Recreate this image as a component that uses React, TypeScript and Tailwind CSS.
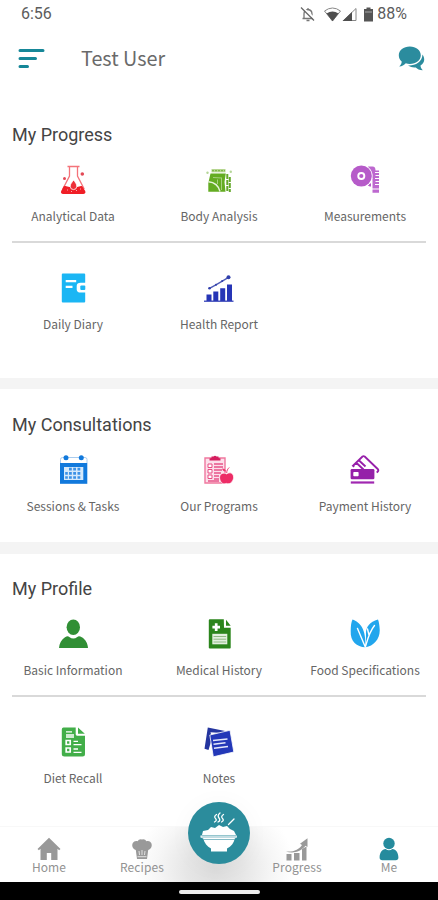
import type { ReactNode } from "react";

const labelFont = "font-['Noto_Sans_CJK_SC','Noto_Sans',sans-serif]";
const headFont = "font-['Roboto',sans-serif]";

function Icon({ children }: { children: ReactNode }) {
  return (
    <svg viewBox="0 0 30 30" className="block h-[30px] w-[30px]" fill="none">
      {children}
    </svg>
  );
}

const Flask = () => (
  <Icon>
    <path d="M9.500 1.500h12M11.500 2v9L4.800 24M19.500 2v9L26.200 24" stroke="#f4737a" strokeWidth="1.300" />
    <path d="M5.600 21.500c2.400-1.400 4 .6 6.200.4h7c2 .2 3.800-1.600 5.600-.4l2.800 4.600c.8 1.600-.2 2.900-1.900 2.900H5.100c-1.700 0-2.700-1.300-1.900-2.900z" fill="#f01e26" />
    <path d="M15.600 15c1.800 2.500 3.200 4.200 3.200 6.300a3.300 3.300 0 0 1-6.600 0c0-2.100 1.600-3.800 3.400-6.300z" fill="#ed3039" stroke="#fff" strokeWidth=".8" />
    <path d="M9 25h.8M13 26.500h.8M18 25.500h.8M22 24h.8" stroke="#fff" strokeWidth=".8" />
    <circle cx="6.500" cy="13.500" r="1.500" fill="#e34956" />
    <circle cx="24.300" cy="9" r="1.800" fill="#e34956" />
  </Icon>
);

const Body = () => (
  <Icon>
    <path d="M7.500 4h14v3.300h-14z" fill="#b6d690" />
    <path d="M8 5.600h13" stroke="#7fb84a" strokeWidth="1.400" strokeDasharray="2 1" />
    <path d="M6.500 8.500h15.300l-1.300 8.500 1 9.800H4.300V18z" fill="#64ac22" />
    <path d="M4.500 16.800c6.500.5 10 4 11.500 9.700" stroke="#e6f3da" strokeWidth="1.400" />
    <path d="M9 12.500l9 .5M13.500 14.500v4.500M17.500 13v12" stroke="#a7d07f" strokeWidth="1" />
    <path d="M23.300 9v18M25.800 12v15" stroke="#65a92b" strokeWidth="2" strokeDasharray="5 1" />
    <circle cx="3.500" cy="7.800" r="1.200" fill="#b4d697" />
    <circle cx="26.800" cy="6.800" r="1.200" fill="#b4d697" />
  </Icon>
);

const Tape = () => (
  <Icon>
    <path d="M18 1.500h4.500c2.200 0 3 1.500 3 4H29v22.300h-6.500V13L19 9z" fill="#bd68cf" />
    <path d="M25 7.500h4.500M25.500 10.500h4M25 13.500h4.500M25.500 16.500h4M25 19.500h4.500M22 24h7.500" stroke="#fff" strokeWidth="1.200" />
    <circle cx="11.300" cy="11" r="11.300" fill="#fff" />
    <circle cx="11.300" cy="11" r="10.500" fill="#b65bc9" />
    <circle cx="11.300" cy="11" r="4" fill="#fff" />
    <circle cx="11.300" cy="11" r="2.100" fill="#b65bc9" />
    <path d="M18.500 20.500l2 .7v-2.500z" fill="#b65bc9" stroke="#b65bc9" />
  </Icon>
);

const Diary = () => (
  <Icon>
    <path d="M4.800.5h21.400a1 1 0 0 1 1 1v8.300h-4.500c-2.600 0-4 1.200-4 3.200v3.400c0 2 1.400 3.200 4 3.200h4.500v9a1 1 0 0 1-1 1H4.800a1 1 0 0 1-1-1V1.500a1 1 0 0 1 1-1z" fill="#1bb6f4" />
    <path d="M7.700 8.200h10.500M7.700 13.800h6.800" stroke="#fff" strokeWidth="2.300" />
    <rect x="22.300" y="12.400" width="5" height="4.600" rx="1" fill="#1bb6f4" />
  </Icon>
);

const Report = () => (
  <Icon>
    <path d="M2.500 21.500h5V28h-5zM9.300 18.500h5V28h-5zM16.200 15.300h5V28h-5zM23 11.500h5V28h-5z" fill="#2635b6" />
    <path d="M0 28.200h29.500" stroke="#3340b8" strokeWidth="1.300" />
    <path d="M5.500 15.300l6.800-3.700 6-3.500 6.200-3.800" stroke="#4e5ab5" strokeWidth="1.400" />
    <circle cx="5.500" cy="15.300" r="1.300" fill="#303fac" />
    <circle cx="12" cy="11.700" r="1" fill="#303fac" />
    <circle cx="18.200" cy="8" r="1" fill="#303fac" />
    <circle cx="24.500" cy="4.200" r="2" fill="#303fac" />
  </Icon>
);

const Calendar = () => (
  <Icon>
    <path d="M2.500 8V4.500Q2.500 2.500 4.500 2.500H27Q29 2.500 29 4.500V8" stroke="#a9ccef" strokeWidth="1" />
    <path d="M2 8h27.300v20.800H2z" fill="#1179dc" />
    <path d="M6 12h19.300v13H6z" fill="#d5e9fb" />
    <path d="M11 12.800h2.800v2.800H11zM15.200 12.800H18v2.800h-2.800zM19.500 12.800h2.800v2.800h-2.800zM7.200 17h2.600v2.800H7.200zM11 17h2.800v2.800H11zM15.200 17H18v2.800h-2.800zM19.500 17h2.800v2.800h-2.800zM7.200 21.300h2.600v2.500H7.200zM11 21.300h2.800v2.500H11zM15.200 21.300H18v2.500h-2.800zM19.500 21.300h2.800v2.500h-2.800z" fill="#3b91e6" />
    <circle cx="8" cy="2.700" r="2.500" fill="#1179dc" />
    <circle cx="23.300" cy="2.700" r="2.500" fill="#1179dc" />
  </Icon>
);

const Programs = () => (
  <Icon>
    <path d="M1 3h20v25H1z" fill="#fce0eb" stroke="#ef789f" strokeWidth="1.400" />
    <path d="M5.500 3.500l2-.5V1.500h2Q11 0 12.500 1.500h2V3l2 .5v2h-11z" fill="#d51e5f" />
    <path d="M4 9h4v3.500H4zM4 14.500h4V18H4zM4 20h4v3.500H4z" fill="#fff" stroke="#e84d83" />
    <path d="M10 9h9M10 12h9M10 15h8M10 18h7M10 21h5M10 24h5M4 26h11" stroke="#e65389" strokeWidth="1.400" />
    <path d="M18 18.500c-3.200 1.200-3 6.500-.5 9 1.500 1.600 3 1.600 4.800.9 2 .7 4 .4 5.500-1.400 2.200-2.600 2.600-7.200-.3-8.700-1.800-1-3.200-.3-4.900.6-1.600-.7-2.900-1-4.600-.4z" fill="#ed2c66" stroke="#fff" strokeWidth=".7" />
    <path d="M22.700 18c0-2.500 1-4 2.500-5.500" stroke="#ed3871" strokeWidth="1" />
    <path d="M22 16.500c-2.500 0-3.500-1-4-3 2.500 0 3.700 1 4 3z" fill="#ed3871" />
  </Icon>
);

const Cards = () => (
  <Icon>
    <path d="M4.200 11.800L3 10.700 12.500 1.500Q13.500.8 14.700 1.500l13 12.500q1 1 .3 2.200l-1.200 1.400M6 7.500l7.500 7M8.500 5l7 6.500" stroke="#9720aa" strokeWidth="1.900" />
    <rect x=".6" y="14" width="23.800" height="10.300" rx="1.300" fill="#9521a9" />
    <rect x="3.300" y="17" width="5.300" height="4.300" rx=".8" fill="#fff" />
    <path d="M.8 27.500h23.400" stroke="#a027b1" strokeWidth="2.200" />
  </Icon>
);

const Person = () => (
  <Icon>
    <ellipse cx="15.300" cy="8.200" rx="6.700" ry="7.700" fill="#318f35" />
    <path d="M1 29c.3-4.800 2.500-8.700 6-10.800 1.800-1 3-1.500 4.300-.3q4 3 8 0c1.300-1.200 2.800-.7 4.500.3C27.400 20.300 29.800 24.200 30 29z" fill="#318f35" />
  </Icon>
);

const Medical = () => (
  <Icon>
    <path d="M5.800.3h14l.2 8.500h6.700v20q0 .7-.8.700H5.800q-1 0-1-.8V1.300q0-1 1-1z" fill="#2b851c" />
    <path d="M22 .8l4.700 6H22z" fill="#2b851c" />
    <path d="M12.200 4.300v7.600M8.400 8.100H16" stroke="#fff" strokeWidth="2.700" />
    <path d="M8.300 14.800h15v10.500h-15z" fill="#e2efdf" />
    <path d="M9.500 17.500h12.700M9.500 20.200h12.700M9.500 23h12.700" stroke="#90ba84" strokeWidth="1" />
  </Icon>
);

const Leaves = () => (
  <Icon>
    <path d="M2.500.5C10 3.300 16.500 10 15.200 28.300 7 28 .1 22.500.7 12 .8 7 1.200 3 2.500.5z" fill="#22a6ed" />
    <path d="M28 .5C19 2.800 15.500 9 16 15.500l-.3 12.800C23.500 27 30.200 20 29.700 10.500 29.500 6.500 29 3 28 .5z" fill="#22a6ed" />
    <path d="M7.500 9.500l7.700 18.300M24.500 6.500c-5 6-6.500 12-9 21M17.500 10l1.500 6" stroke="#fff" strokeWidth="1.400" strokeLinecap="round" />
  </Icon>
);

const Diet = () => (
  <Icon>
    <path d="M5.500.5h12.200v6.800q0 1.400 1.400 1.400H27V27q0 2.500-2.500 2.500h-18Q3.800 29.500 3.800 27V2.500q0-2 1.700-2z" fill="#42ae49" />
    <path d="M20 .5l6.800 6.300H20z" fill="#42ae49" />
    <path d="M8 4.800h6M8 8h8M8 10h8M15.500 14.300H20M15.500 17.600h8M15.500 22H20M15.500 25.300h8" stroke="#fff" strokeWidth="1.300" />
    <path d="M8.200 13.500h4v4h-4zM8.200 21h4v4h-4z" stroke="#fff" strokeWidth="1.700" />
  </Icon>
);

const Notes = () => (
  <Icon>
    <path d="M3.800.5l18.500 3.700-.3 2L6.500 5.300 8 11.500 4.500 23 .5 21.700z" fill="#24359f" />
    <path d="M5.800 8L26 3.300 29.800 25 9.300 29.800z" fill="#2338b8" stroke="#fff" strokeWidth=".8" />
    <path d="M9 13.500l14.500-1.500M9.500 17.300l12-1.500M10 21.200l14-1.700" stroke="#e5e9fb" strokeWidth="1.500" />
  </Icon>
);

interface Item {
  label: string;
  icon: ReactNode;
}

function Tile({ label, icon }: Item) {
  return (
    <div className="flex w-[146px] flex-col items-center">
      {icon}
      <span className={`mt-[11px] mb-px flex h-5 items-center justify-center whitespace-nowrap text-[12px] text-[#666] ${labelFont}`}>{label}</span>
    </div>
  );
}

function Heading({ children }: { children: ReactNode }) {
  return <h2 className={`pl-3 text-[18px] leading-6 text-[#444] ${headFont}`}>{children}</h2>;
}

function Divider() {
  return <div className="mx-[12px] mt-[14px] mb-[30px] h-[2px] bg-[#d9d9d9]" />;
}

const progress: Item[] = [
  { label: "Analytical Data", icon: <Flask /> },
  { label: "Body Analysis", icon: <Body /> },
  { label: "Measurements", icon: <Tape /> },
];
const progressMore: Item[] = [
  { label: "Daily Diary", icon: <Diary /> },
  { label: "Health Report", icon: <Report /> },
];
const consultations: Item[] = [
  { label: "Sessions & Tasks", icon: <Calendar /> },
  { label: "Our Programs", icon: <Programs /> },
  { label: "Payment History", icon: <Cards /> },
];
const profile: Item[] = [
  { label: "Basic Information", icon: <Person /> },
  { label: "Medical History", icon: <Medical /> },
  { label: "Food Specifications", icon: <Leaves /> },
];
const profileMore: Item[] = [
  { label: "Diet Recall", icon: <Diet /> },
  { label: "Notes", icon: <Notes /> },
];

function Row({ items }: { items: Item[] }) {
  return (
    <div className="flex">
      {items.map((item) => (
        <Tile key={item.label} {...item} />
      ))}
    </div>
  );
}

function StatusBar() {
  return (
    <div className={`flex h-7 items-center justify-between pr-[31px] pl-[21px] text-[16px] text-[#5c5c5c] ${headFont}`}>
      <span>6:56</span>
      <div className="flex items-center">
        <svg width="76" height="18" viewBox="0 0 76 18" fill="none" className="mr-[2px]">
          <path d="M5 13V9q0-4 4-4.500 4 .5 4 4.500v4M3.500 13.500h11M9 3v1.500M7.500 15.500h3" stroke="#777" strokeWidth="1.300" />
          <path d="M3 2l14 13" stroke="#fff" strokeWidth="2" />
          <path d="M2 2.500l13 13" stroke="#666" strokeWidth="1.300" />
          <path d="M25.500 6q8-6 16 0l-8 10z" stroke="#888" fill="#fff" />
          <path d="M27.500 8.500q6-4 12 0l-6 7.700z" fill="#4f4f4f" />
          <path d="M57 3.500v12H44.500z" stroke="#888" fill="#fff" />
          <path d="M53 7v9h-9.500z" fill="#4f4f4f" />
          <path d="M67.500 2.500h4V4H74v12.500h-9V4h2.500z" fill="#555" />
          <path d="M66 7h7" stroke="#aaa" />
        </svg>
        <span>88%</span>
      </div>
    </div>
  );
}

function Header() {
  return (
    <header className="flex h-[61px] items-center pr-[13px] pl-[18px]">
      <svg width="28" height="22" viewBox="0 0 28 22" stroke="#168798" strokeWidth="3" strokeLinecap="round">
        <path d="M2 2.500h23M2 10.500h15.500M2 18.500h7.500" />
      </svg>
      <h1 className={`ml-[35px] mb-px flex-1 text-[19.8px] text-[#6a6a6a] ${labelFont}`}>Test User</h1>
      <svg width="27" height="25" viewBox="0 0 27 25" fill="#2b8c9e">
        <path d="M24.500 8.500c2.800 4 2.200 8.500-2 11 0 2 1.200 3.500 2.300 4.700-3.500 0-5.500-1.200-7-2.800-2.800.3-5.500-.3-7.800-1.900 7 .4 14-3 14.500-11z" />
        <path d="M11.800.5c6.200 0 11 3.700 11 8.700s-4.800 8.700-11 8.700c-1.600 0-2.800-.2-4-.6-1.800 1.900-3.700 3.100-6.600 3.200 1.800-1.600 2.500-3.400 2.500-5.100C1.800 13.900.8 11.800.8 9.200c0-5 4.800-8.700 11-8.700z" />
      </svg>
    </header>
  );
}

function NavItem({ label, icon, active = false }: { label: string; icon: ReactNode; active?: boolean }) {
  return (
    <div className={`flex w-20 flex-col items-center ${active ? "text-[#258b9d]" : "text-[#999]"}`}>
      <svg width="26" height="24" viewBox="0 0 26 24" fill="currentColor">
        {icon}
      </svg>
      <span className={`mt-[-3px] text-[12px] leading-[18px] tracking-[0.1px] text-[#929292] ${labelFont}`}>{label}</span>
    </div>
  );
}

function BottomNav() {
  return (
    <nav className="relative flex h-[56px] border-t border-[#f8f8f8] bg-[radial-gradient(ellipse_80px_72px_at_215px_42px,#dcdcdc_0%,#e6e6e6_35%,#f6f6f6_72%,#ffffff_100%)] pt-[10px] pl-[9px]">
      <NavItem label="Home" icon={<path d="M13 .8L24.500 12l-1.400 1.300-1.600-1.500V23h-6.300v-7h-4.400v7H4.500V11.800l-1.600 1.500L1.500 12z" />} />
      <div className="ml-[13px]">
        <NavItem
          label="Recipes"
          icon={
            <g>
              <path d="M8 22L6.800 13C3.500 12 2.500 8.500 3.800 6c1.200-2 3.200-2.500 4.700-1.700Q10 1.800 13 2.500q3-.7 4.500 1.800c1.800-.8 3.700-.2 4.700 1.700 1.300 2.500.3 6-3 7L18 22z" />
              <path d="M10 14l.5 4M13 13v5M16 14l-.5 4M8.500 19.700h9" stroke="#e2e2e2" strokeWidth="1" />
            </g>
          }
        />
      </div>
      <div className="ml-[75px]">
        <NavItem
          label="Progress"
          icon={
            <g>
              <path d="M2.500 17h5v6.500h-5zM10 16h5.500v7.500H10zM18 12l4.500-2.500v14H18z" />
              <path d="M2 14.500c8 .7 13-2 16-6.500l-2-1.200 7.500-5.500V10l-2-1.200C17 14.500 9.500 17 2 14.500z" />
            </g>
          }
        />
      </div>
      <div className="ml-[12px]">
        <NavItem
          active
          label="Me"
          icon={
            <g>
              <circle cx="13" cy="6.500" r="5.700" />
              <path d="M3.600 20.500c0-5 2.500-8 6-8.500q3.400 2.500 6.800 0c3.500.5 6 3.500 6 8.500 0 1.700-1 2.700-2.700 2.700H6.300c-1.700 0-2.700-1-2.700-2.700z" />
            </g>
          }
        />
      </div>
      <div className="absolute top-[-25px] left-[188px] h-[62px] w-[62px] rounded-full bg-[#2b8c9c] shadow-[0_2px_20px_5px_rgba(0,0,0,0.025)]">
        <svg viewBox="0 0 62 62" fill="none">
          <path d="M28.500 12.500q-3 2-1 4t-1 3.500M32 11q-3 2.500-1 5t-1 4M35.500 12.500q-3 2-1 4t-1 3.500M40.500 22.500l5.500-5.500" stroke="#fff" strokeWidth="1.300" strokeLinecap="round" />
          <path d="M14 33l1-4 5-1 3-3 4 1 4-3 4 2 4-1 3 3 4 2 2 4z" fill="#fff" />
          <path d="M12.500 33.500h36.300v2l-2 1c-1 4.500-3.500 8-7.800 10v3H23v-3c-4-2-6.500-5.500-7.800-10l-2.700-1z" fill="#fff" />
          <path d="M13.500 35h34.500M15 37.500h32" stroke="#67aab7" strokeWidth=".8" />
        </svg>
      </div>
    </nav>
  );
}

export default function App() {
  return (
    <div className="flex h-[900px] w-[438px] flex-col overflow-hidden bg-white">
      <StatusBar />
      <Header />
      <main className="h-[737px]">
        <section className="h-[289px] pt-[34px]">
          <Heading>My Progress</Heading>
          <div className="pt-[18px]">
            <Row items={progress} />
            <Divider />
            <Row items={progressMore} />
          </div>
        </section>
        <div className="h-[11px] bg-[#f4f4f4]" />
        <section className="h-[153px] pt-[24px]">
          <Heading>My Consultations</Heading>
          <div className="pt-[18px]">
            <Row items={consultations} />
          </div>
        </section>
        <div className="h-[12px] bg-[#f4f4f4]" />
        <section className="h-[272px] pt-[23px]">
          <Heading>My Profile</Heading>
          <div className="pt-[18px]">
            <Row items={profile} />
            <Divider />
            <Row items={profileMore} />
          </div>
        </section>
      </main>
      <BottomNav />
      <div className="flex flex-1 items-center justify-center bg-black">
        <div className="mt-[2px] h-[4px] w-[81px] rounded-full bg-[#ececec]" />
      </div>
    </div>
  );
}
